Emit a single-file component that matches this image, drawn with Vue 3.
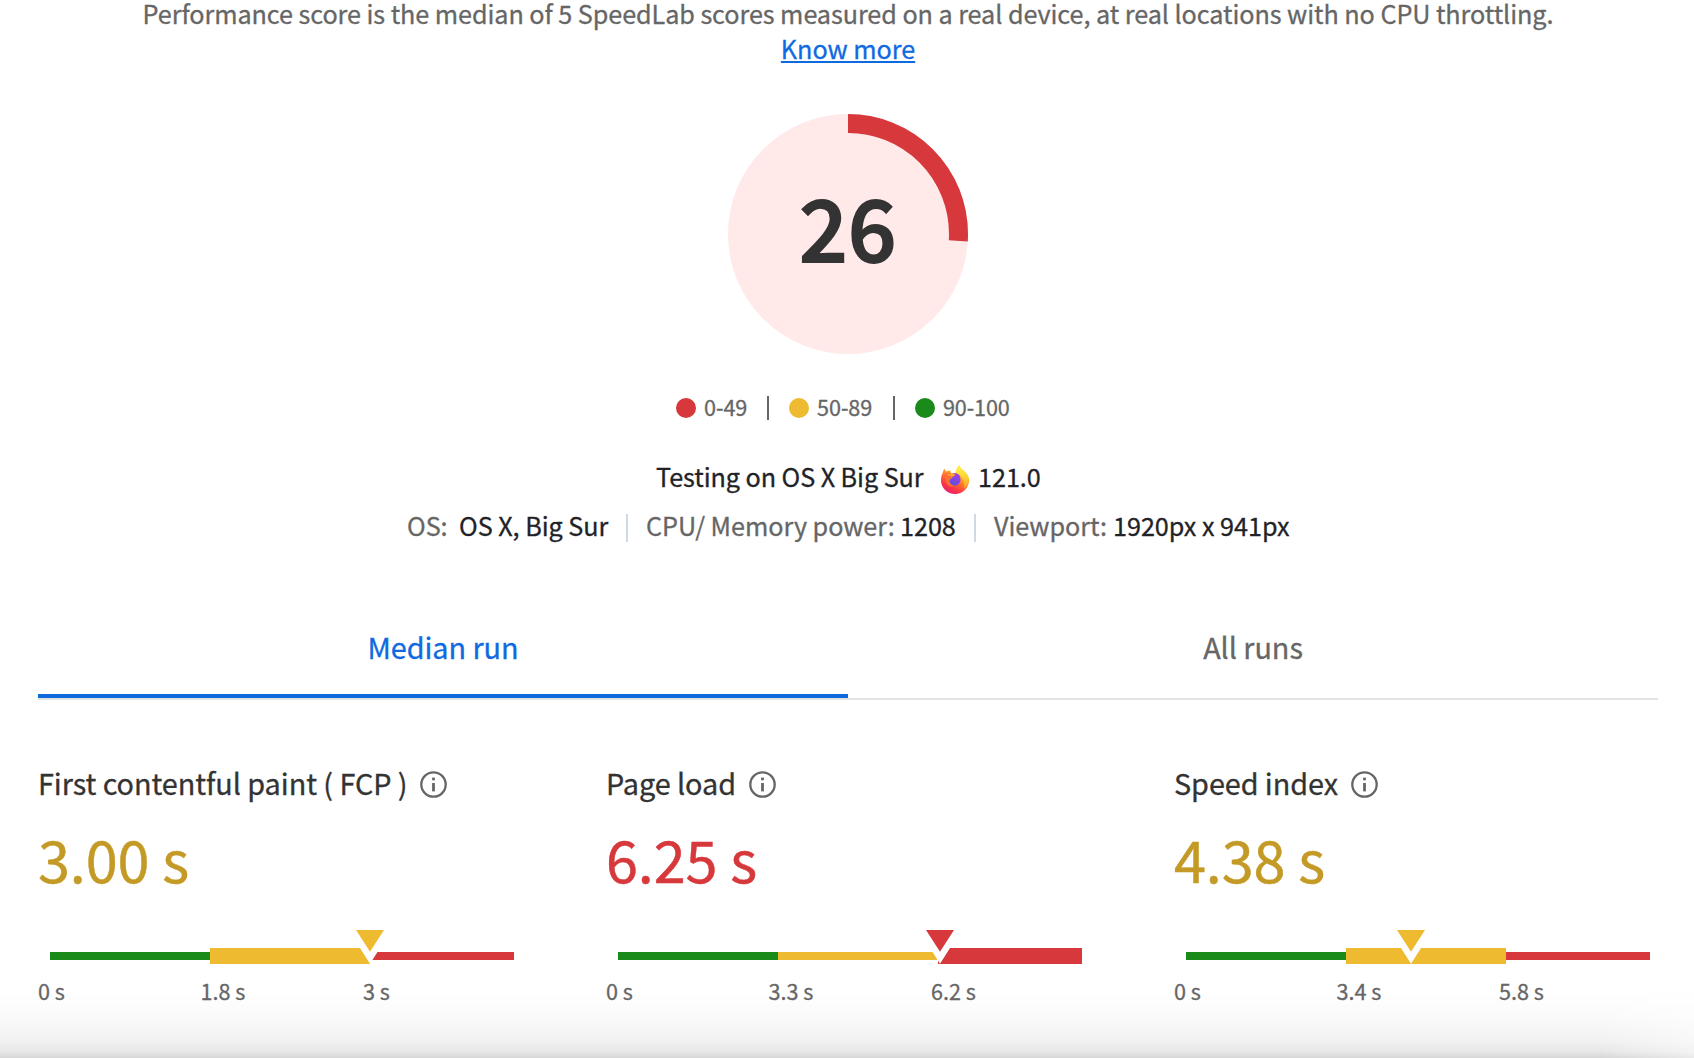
<script setup>
const legend = [
  { label: '0-49', tone: 'red', cls: 'low' },
  { label: '50-89', tone: 'yellow', cls: 'mid' },
  { label: '90-100', tone: 'green', cls: 'high' },
]

const metrics = [
  { name: 'First contentful paint ( FCP )', value: '3.00 s', tone: 'yellow', marker: 320, ticks: ['0 s', '1.8 s', '3 s'] },
  { name: 'Page load', value: '6.25 s', tone: 'red', marker: 322.3, ticks: ['0 s', '3.3 s', '6.2 s'] },
  { name: 'Speed index', value: '4.38 s', tone: 'yellow', marker: 225.2, ticks: ['0 s', '3.4 s', '5.8 s'] },
]

const zones = ['green', 'yellow', 'red']

const score = 26
const radius = 110.5
const circumference = 2 * Math.PI * radius
const dash = `${(circumference * score) / 100} ${circumference}`
</script>

<template>
  <main class="report">
    <p class="intro">
      <span class="intro-text">Performance score is the median of 5 SpeedLab scores measured on a real device, at real locations with no CPU throttling.</span>
      <a class="more">Know more</a>
    </p>

    <div class="gauge">
      <svg class="ring" viewBox="0 0 240 240">
        <circle cx="120" cy="120" r="120" fill="#ffe9e9" />
        <circle cx="120" cy="120" :r="radius" fill="none" stroke="#d6383b" stroke-width="19" :stroke-dasharray="dash" transform="rotate(-90 120 120)" />
      </svg>
      <span class="score">{{ score }}</span>
    </div>

    <div class="legend">
      <div v-for="item in legend" :key="item.label" class="range" :class="item.cls">
        <i class="dot" :class="item.tone"></i><span>{{ item.label }}</span>
      </div>
    </div>

    <div class="browser">
      <span class="testing">Testing on OS X Big Sur</span>
      <svg class="firefox" viewBox="0 0 28 29">
        <defs>
          <linearGradient id="body" x1="0.85" y1="0.1" x2="0.35" y2="1">
            <stop offset="0" stop-color="#fff04a" />
            <stop offset="0.3" stop-color="#ffb52e" />
            <stop offset="0.58" stop-color="#ff6a2f" />
            <stop offset="0.82" stop-color="#fb3348" />
            <stop offset="1" stop-color="#ea2070" />
          </linearGradient>
          <linearGradient id="flame" x1="0.4" y1="0" x2="0.6" y2="1">
            <stop offset="0" stop-color="#fff24c" />
            <stop offset="0.6" stop-color="#ffd033" />
            <stop offset="1" stop-color="#ff9b2b" />
          </linearGradient>
          <linearGradient id="globe" x1="0.8" y1="0" x2="0.2" y2="1">
            <stop offset="0" stop-color="#a33ff0" />
            <stop offset="1" stop-color="#5b4fd6" />
          </linearGradient>
        </defs>
        <path d="M1.6 8.2C1.9 6.3 2.6 4.6 3.6 3.4C3.9 4.8 4.4 5.8 5.3 6.5C6.6 5.6 8.2 5.3 9.4 5.6L10 8.2L14 8L16 6.4C15.5 4 17 1.4 18.6 0C18.7 2.2 20.3 3.8 22.4 5.6C25.7 8.3 28 11.2 28 15.2C28 22.8 21.8 29 14.1 29C6.3 29 0 22.9 0 15.4C0 12.6 .5 10.2 1.6 8.2Z" fill="url(#body)" />
        <path d="M18.6 0C18.7 2.2 20.3 3.8 22.4 5.6C26 8.6 28 11.5 27.9 15.6C27.8 19.2 25.9 22.3 22.8 23.4C24.2 18.3 22.5 12.3 18 9.5C13.6 8 13.6 4.4 18.6 0Z" fill="url(#flame)" />
        <circle cx="13.7" cy="14.9" r="5.8" fill="url(#globe)" />
        <path d="M11.4 8.9C14.5 7.6 18 8.6 19.6 12.4C18.6 11.8 17.6 11.7 16.8 12L14 10Z" fill="#9a3fe8" />
        <path d="M4.6 8.4C7 7.3 9.2 7.8 10.5 9.1C11.7 9 13.2 9.2 14.2 9.8C14.1 10.9 12.8 11.4 11.5 11.8L10.8 13.6C9.7 14 8.8 14.4 8.6 15.6C8.3 18.8 11.2 20.8 14 20.8C10 23 5.6 20.3 4.8 16C4.3 13.4 4 10.6 4.6 8.4Z" fill="#ff6f31" />
        <path d="M5.7 9.4C7.5 8.7 9.2 9.3 10.5 9.1C11.7 9 13.2 9.2 14.2 9.8C14.1 10.9 12.6 11.3 11.3 11.6C9 11.2 7.2 10.4 5.7 9.4Z" fill="#ffa436" />
      </svg>
      <span class="version">121.0</span>
    </div>

    <div class="device">
      <span class="os-key">OS:</span><b class="os-value">OS X, Big Sur</b>
      <i class="rule"></i>
      <span class="cpu-key">CPU/ Memory power:</span><b class="cpu-value">1208</b>
      <i class="rule"></i>
      <span class="view-key">Viewport:</span><b class="view-value">1920px x 941px</b>
    </div>

    <nav class="tabs">
      <a class="tab active">Median run</a>
      <a class="tab">All runs</a>
    </nav>

    <section class="metrics">
      <article v-for="m in metrics" :key="m.name" class="metric">
        <h3 class="name">
          <span>{{ m.name }}</span>
          <svg class="info" viewBox="0 0 27 27">
            <circle cx="13.5" cy="13.5" r="12.2" fill="none" stroke="#666" stroke-width="2.3" />
            <rect x="12.1" y="6.6" width="2.8" height="2.7" fill="#666" />
            <rect x="12.1" y="12" width="2.8" height="8.4" fill="#666" />
          </svg>
        </h3>
        <div class="value" :class="m.tone">{{ m.value }}</div>
        <div class="bar">
          <i v-for="z in zones" :key="z" class="zone" :class="[z, { current: z === m.tone }]"></i>
          <svg class="marker" :style="{ left: m.marker - 22 + 'px' }" viewBox="0 0 44 34">
            <path d="M0.5 0H43.5L22 33.8Z" fill="#fff" />
            <path class="tip" :class="m.tone" d="M8 0H36L22 21.7Z" />
          </svg>
        </div>
        <div class="ticks">
          <span v-for="t in m.ticks" :key="t">{{ t }}</span>
        </div>
      </article>
    </section>

    <div class="shade"></div>
  </main>
</template>

<style>
html,
body {
  margin: 0;
  background: #fff;
  overflow: hidden;
}
</style>

<style scoped>
.report {
  position: relative;
  box-sizing: border-box;
  width: 1694px;
  height: 1058px;
  padding: 0 36px 0 38px;
  overflow: hidden;
  background: #fff;
  color: #666;
  font-family: "Noto Sans CJK SC", "Noto Sans", sans-serif;
  font-size: 25.2px;
  letter-spacing: -0.04px;
  -webkit-text-stroke: 0.3px currentColor;
  display: flex;
  flex-direction: column;
}
i,
b {
  font-style: normal;
  font-weight: 400;
}
.intro {
  margin: 0;
  display: flex;
  flex-direction: column;
  align-items: center;
  line-height: 35px;
  white-space: nowrap;
}
.intro-text {
  height: 31px;
  line-height: 27px;
  letter-spacing: -0.063px;
}
.more {
  color: #0f6ae0;
  text-decoration: underline;
  text-decoration-thickness: 2px;
  text-underline-offset: 2px;
}
.gauge {
  width: 240px;
  height: 240px;
  margin: 48px auto 0;
  display: grid;
}
.ring,
.score {
  grid-area: 1 / 1;
}
.ring {
  width: 240px;
  height: 240px;
}
.score {
  font-size: 84.5px;
  font-weight: 500;
  letter-spacing: 0.6px;
  -webkit-text-stroke: 2px currentColor;
  line-height: 222px;
  text-align: center;
  color: #333;
}
.legend {
  display: flex;
  height: 24px;
  margin: 42px 0 0 638px;
  font-size: 21.6px;
  line-height: 23px;
}
.range {
  box-sizing: border-box;
  display: flex;
  align-items: center;
  gap: 8px;
  white-space: nowrap;
}
.range span {
  padding-bottom: 3px;
}
.range + .range {
  padding-left: 20px;
  border-left: 2px solid #666;
}
.low { width: 91px; }
.mid { width: 126px; }
.high { letter-spacing: -0.12px; }
.dot {
  width: 20px;
  height: 20px;
  border-radius: 50%;
}
.dot.red, .zone.red { background: #d6383b; }
.dot.yellow, .zone.yellow { background: #eeba30; }
.dot.green, .zone.green { background: #1a8a1a; }
.browser {
  display: flex;
  height: 36px;
  margin: 38px 0 0 618px;
  line-height: 36px;
  color: #1f2328;
  white-space: nowrap;
}
.testing {
  width: 285px;
  letter-spacing: -0.07px;
}
.firefox {
  width: 28px;
  height: 29px;
  margin: 7px 9px 0 0;
}
.device {
  display: flex;
  height: 36px;
  margin: 13px 0 0 369px;
  line-height: 36px;
  white-space: nowrap;
}
.device b { color: #1f2328; }
.os-key { width: 52px; }
.os-value { width: 167px; }
.cpu-key { width: 254px; }
.cpu-value { width: 74px; }
.view-key { width: 119px; }
.rule {
  width: 2px;
  height: 28px;
  margin: 7px 18px 0 0;
  background: #d0d9e1;
}
.tabs {
  display: flex;
  height: 78px;
  margin-top: 77px;
  border-bottom: 2px solid #e3e3e3;
  font-size: 28.8px;
}
.tab {
  flex: 1;
  box-sizing: border-box;
  line-height: 54px;
  text-align: center;
}
.tab.active {
  color: #0f6ae0;
  border-bottom: 4px solid #0f6ae0;
}
.metrics {
  display: flex;
  margin-top: 65px;
}
.metric {
  width: 568px;
  flex: none;
}
.name {
  display: flex;
  margin: 0;
  height: 40px;
  font-size: 28.8px;
  font-weight: 400;
  line-height: 35px;
  letter-spacing: -0.06px;
  color: #333;
  white-space: nowrap;
}
.info {
  width: 27px;
  height: 27px;
  margin: 6px 0 0 13px;
}
.value {
  margin-top: 13px;
  font-size: 57.6px;
  line-height: 80px;
  white-space: nowrap;
  letter-spacing: -0.12px;
  -webkit-text-stroke: 0.5px currentColor;
}
.value.yellow { color: #c49a26; }
.value.red { color: #d6383b; }
.bar {
  position: relative;
  display: flex;
  align-items: center;
  width: 464px;
  height: 16px;
  margin: 50px 0 0 12px;
}
.zone {
  width: 160px;
  height: 8px;
}
.zone:nth-child(3) { width: 144px; }
.zone.current { height: 16px; }
.marker {
  position: absolute;
  top: -18px;
  width: 44px;
  height: 34px;
}
.tip.yellow { fill: #eeba30; }
.tip.red { fill: #d6383b; }
.ticks {
  display: flex;
  margin-top: 10px;
  font-size: 21.6px;
  line-height: 34px;
}
.ticks span { width: 162.5px; }
.shade {
  position: absolute;
  left: 0;
  right: 0;
  bottom: 0;
  height: 68px;
  background: linear-gradient(rgba(0, 0, 0, 0), rgba(0, 0, 0, 0.02) 40%, rgba(0, 0, 0, 0.055) 75%, rgba(0, 0, 0, 0.09) 90%, rgba(0, 0, 0, 0.16));
  mask-image: linear-gradient(to right, #000 1600px, rgba(0, 0, 0, 0.5) 1694px);
}
</style>
